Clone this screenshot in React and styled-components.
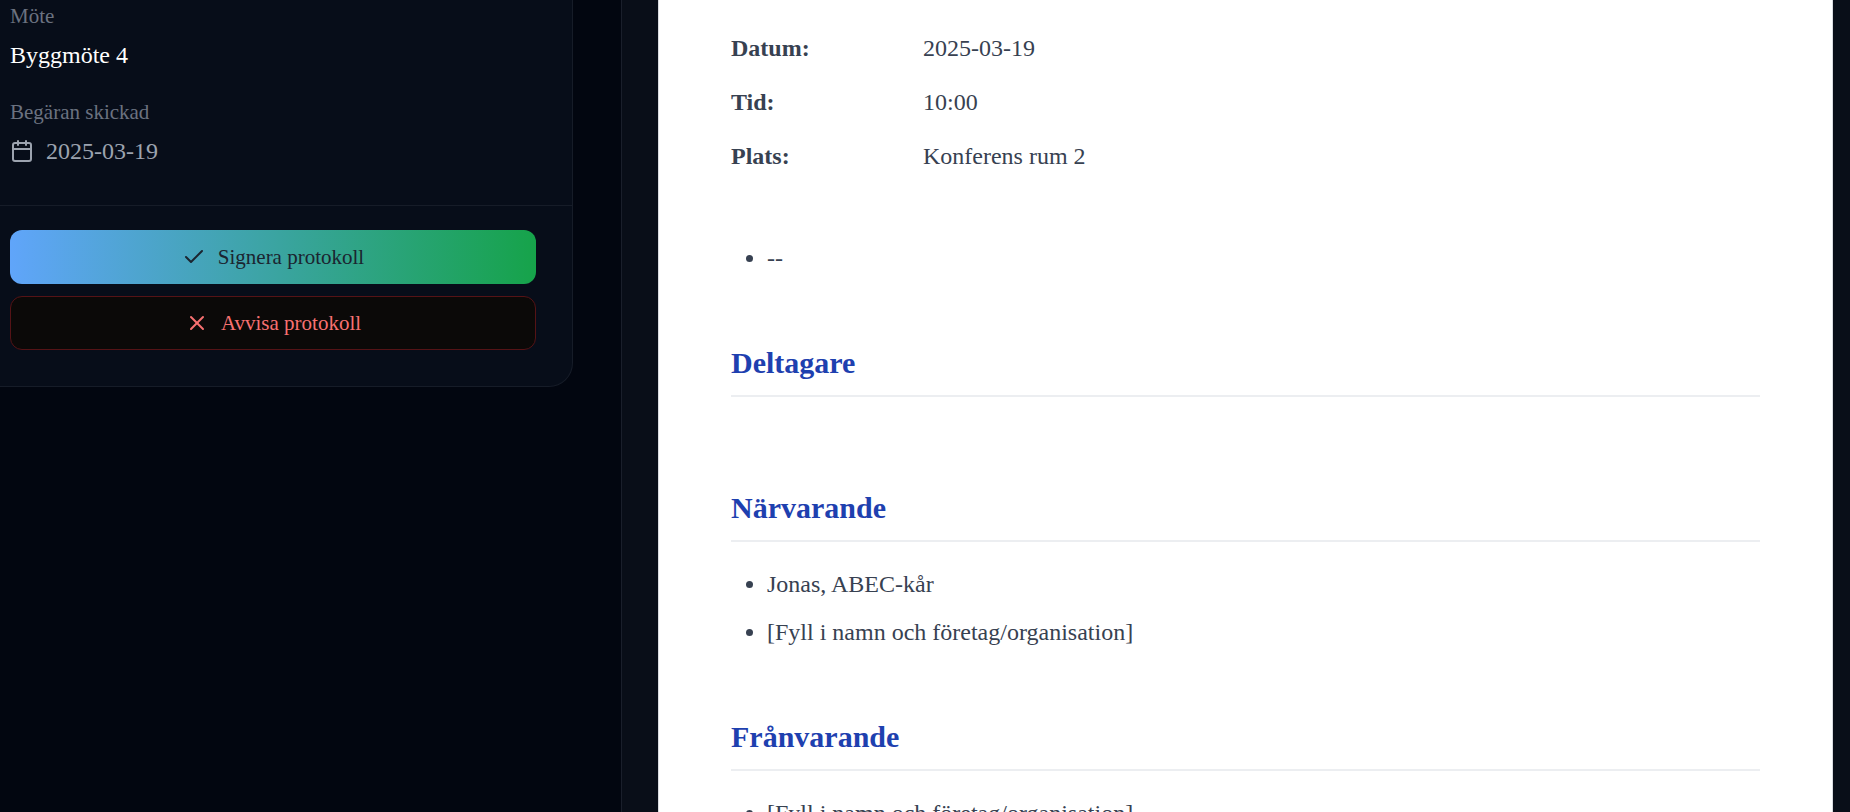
import React from "react";
import styled, { createGlobalStyle } from "styled-components";
import { Calendar, Check, X } from "lucide-react";

const GlobalStyle = createGlobalStyle`
  html, body {
    margin: 0;
    padding: 0;
    height: 100%;
    overflow: hidden;
    background: #020610;
  }
  * {
    box-sizing: border-box;
  }
`;

const Page = styled.div`
  display: flex;
  width: 1850px;
  height: 812px;
  overflow: hidden;
  font-family: "Liberation Serif", "Times New Roman", serif;
  font-size: 24px;
  line-height: 36px;
`;

const Sidebar = styled.aside`
  width: 621px;
  flex: none;
  background: #020610;
`;

const Card = styled.section`
  width: 573px;
  background: #070d19;
  border-right: 1px solid #161c28;
  border-bottom: 1px solid #161c28;
  border-bottom-right-radius: 24px;
`;

const CardBody = styled.div`
  padding: 0 10px 36px;
  border-bottom: 1px solid #161c28;
`;

const Label = styled.div`
  font-size: 21px;
  line-height: 32px;
  color: #6b7280;
  margin-top: ${(p) => p.$top || 0}px;
`;

const MeetingName = styled.div`
  margin-top: 5px;
  color: #ffffff;
`;

const DateRow = styled.div`
  display: flex;
  align-items: center;
  gap: 12px;
  margin-top: 5px;
  color: #9ca3af;
`;

const Actions = styled.div`
  display: flex;
  flex-direction: column;
  gap: 12px;
  width: 546px;
  padding: 24px 10px 36px;
`;

const ActionButton = styled.button`
  display: flex;
  align-items: center;
  justify-content: center;
  gap: 12px;
  height: 54px;
  padding: 0;
  border-radius: 12px;
  font: inherit;
  font-size: 21px;
  cursor: pointer;
  border: ${(p) => (p.$danger ? "1px solid #551316" : "none")};
  color: ${(p) => (p.$danger ? "#f87171" : "#1b2530")};
  background: ${(p) =>
    p.$danger ? "#0b0908" : "linear-gradient(90deg, #60a5fa, #16a34a)"};
`;

const Viewer = styled.main`
  flex: 1;
  display: flex;
  padding: 0 17px 0 36px;
  background: #090e18;
  border-left: 1px solid #1a1f2b;
`;

const Sheet = styled.article`
  flex: 1;
  padding: 21px 72px 0;
  background: #ffffff;
  color: #374151;
  border-left: 1px solid #d9dbe0;
  border-right: 1px solid #d9dbe0;
`;

const InfoTable = styled.table`
  border-collapse: collapse;
  margin-bottom: 57px;
`;

const InfoLabel = styled.th`
  width: 192px;
  padding: 9px 0;
  text-align: left;
  font-weight: 700;
`;

const InfoValue = styled.td`
  padding: 9px 0;
`;

const Heading = styled.h2`
  margin: 64px 0 24px;
  padding-bottom: 10px;
  font-size: 30px;
  line-height: 45px;
  font-weight: 700;
  color: #1e40af;
  border-bottom: 2px solid #eceef1;
`;

const List = styled.ul`
  margin: 0;
  padding-left: 36px;
`;

const Item = styled.li`
  margin-bottom: 12px;
`;

// keeps the margins around an empty section from collapsing
const EmptySection = styled.div`
  display: flow-root;
`;

const rows = [
  ["Datum:", "2025-03-19"],
  ["Tid:", "10:00"],
  ["Plats:", "Konferens rum 2"],
];

export default function App() {
  return (
    <Page>
      <GlobalStyle />
      <Sidebar>
        <Card>
          <CardBody>
            <Label>Möte</Label>
            <MeetingName>Byggmöte 4</MeetingName>
            <Label $top={23}>Begäran skickad</Label>
            <DateRow>
              <Calendar size={24} strokeWidth={2} />
              2025-03-19
            </DateRow>
          </CardBody>
          <Actions>
            <ActionButton>
              <Check size={24} strokeWidth={2} />
              Signera protokoll
            </ActionButton>
            <ActionButton $danger>
              <X size={24} strokeWidth={2} />
              Avvisa protokoll
            </ActionButton>
          </Actions>
        </Card>
      </Sidebar>
      <Viewer>
        <Sheet>
          <InfoTable>
            <tbody>
              {rows.map(([label, value]) => (
                <tr key={label}>
                  <InfoLabel>{label}</InfoLabel>
                  <InfoValue>{value}</InfoValue>
                </tr>
              ))}
            </tbody>
          </InfoTable>
          <List>
            <Item>--</Item>
          </List>
          <Heading>Deltagare</Heading>
          <EmptySection />
          <Heading>Närvarande</Heading>
          <List>
            <Item>Jonas, ABEC-kår</Item>
            <Item>[Fyll i namn och företag/organisation]</Item>
          </List>
          <Heading>Frånvarande</Heading>
          <List>
            <Item>[Fyll i namn och företag/organisation]</Item>
          </List>
        </Sheet>
      </Viewer>
    </Page>
  );
}
